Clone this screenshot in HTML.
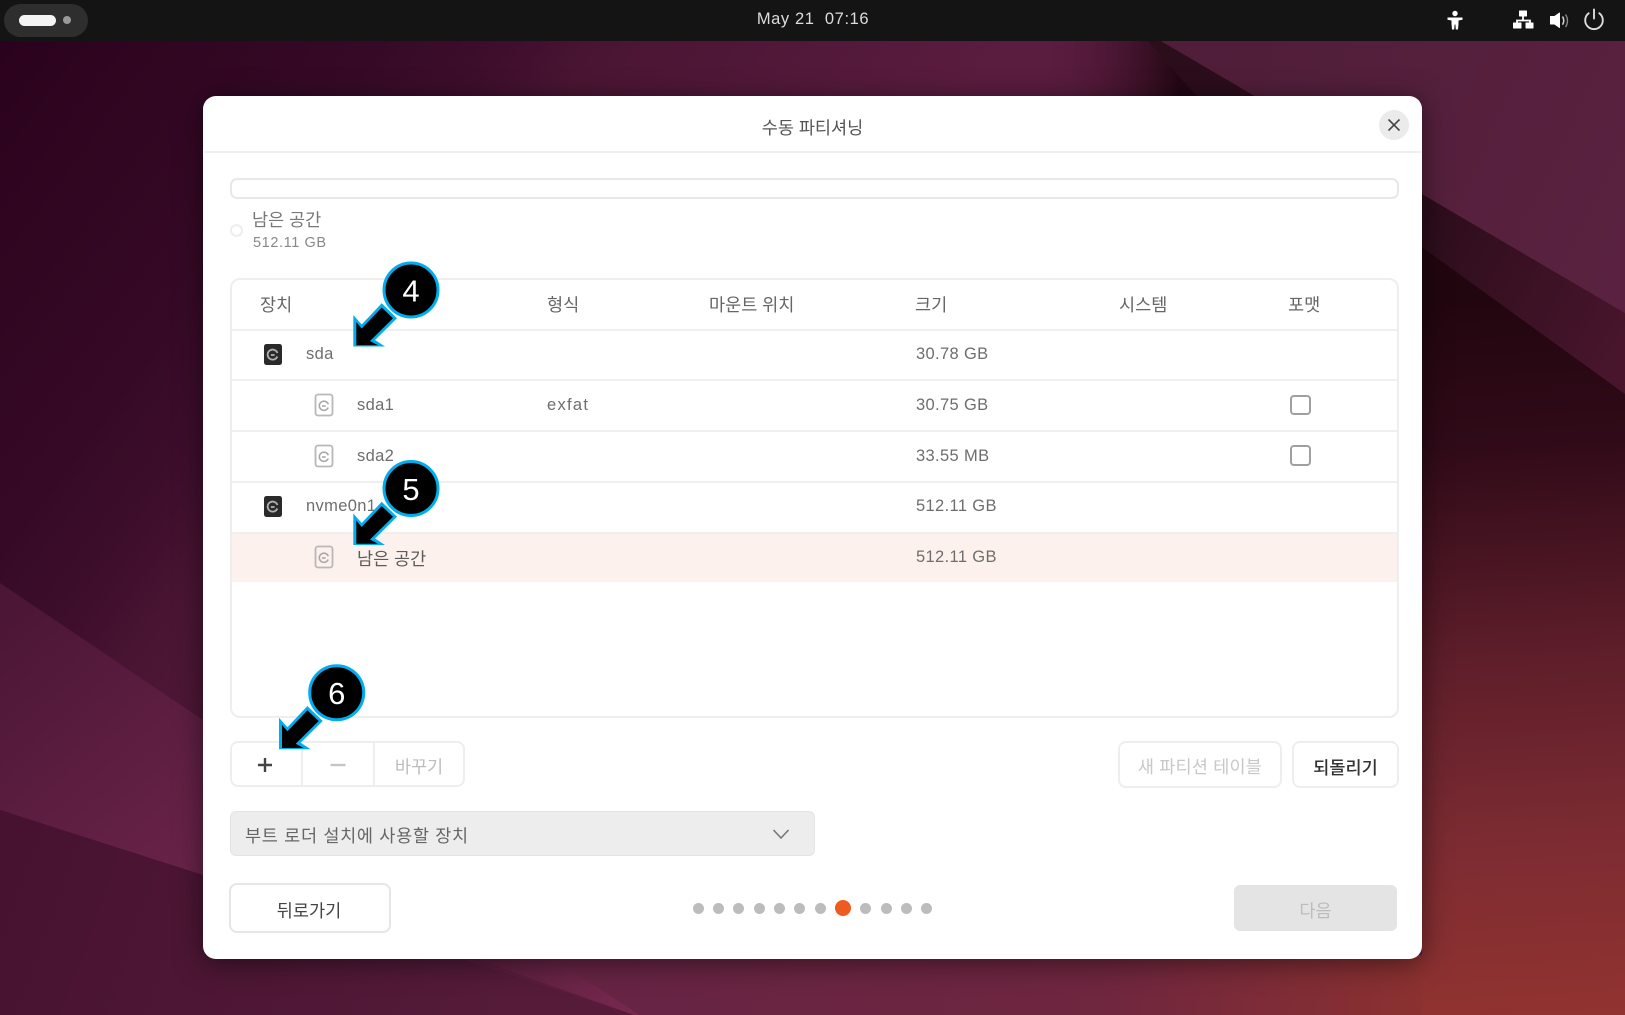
<!DOCTYPE html>
<html lang="ko">
<head>
<meta charset="utf-8">
<title>수동 파티셔닝</title>
<style>
html,body{margin:0;padding:0;width:1625px;height:1015px;overflow:hidden;background:#2b021d}
body{position:relative;font-family:"Liberation Sans","Noto Sans CJK KR",sans-serif;font-size:17.5px;color:#666}
svg{position:absolute;display:block}
.t{position:absolute;line-height:24px;height:24px;white-space:nowrap}
.b{position:absolute;box-sizing:border-box}
.c{text-align:center}
.g{font-size:16.5px;letter-spacing:.35px;color:#6e6e6e}
.h{color:#666}
.line{position:absolute;left:0;right:0;height:2px;background:#efefef}
.cb{position:absolute;box-sizing:border-box;left:1290px;width:20.500px;height:20.500px;border:2px solid #a0a0a0;border-radius:4px;background:#fff}
.dot{position:absolute;width:11px;height:11px;border-radius:50%;background:#bcbcbc;top:903px}
</style>
</head>
<body>
<svg width="1625" height="1015" viewBox="0 0 1625 1015" style="left:0;top:0">
<defs>
<linearGradient id="base" gradientUnits="userSpaceOnUse" x1="0" y1="50" x2="800" y2="650">
<stop offset="0" stop-color="#2b021d"/><stop offset=".3" stop-color="#360a26"/><stop offset=".4" stop-color="#3e0e2c"/><stop offset=".48" stop-color="#4a1533"/><stop offset=".8" stop-color="#5a1c3f"/><stop offset="1" stop-color="#5a1c3f"/>
</linearGradient>
<linearGradient id="wl" gradientUnits="userSpaceOnUse" x1="0" y1="620" x2="210" y2="870">
<stop offset="0" stop-color="#4c1636"/><stop offset="1" stop-color="#6a2449"/>
</linearGradient>
<linearGradient id="wb" gradientUnits="userSpaceOnUse" x1="0" y1="830" x2="500" y2="1015">
<stop offset="0" stop-color="#461230"/><stop offset="1" stop-color="#551b39"/>
</linearGradient>
<linearGradient id="wt" gradientUnits="userSpaceOnUse" x1="470" y1="960" x2="630" y2="1015">
<stop offset="0" stop-color="#5a1e3c"/><stop offset="1" stop-color="#76284e"/>
</linearGradient>
<linearGradient id="br" gradientUnits="userSpaceOnUse" x1="620" y1="1015" x2="1422" y2="1015">
<stop offset="0" stop-color="#672444"/><stop offset=".6" stop-color="#6f263f"/><stop offset="1" stop-color="#8b3130"/>
</linearGradient>
<linearGradient id="rr" gradientUnits="userSpaceOnUse" x1="1500" y1="300" x2="1540" y2="1015">
<stop offset="0" stop-color="#22060f"/><stop offset=".2" stop-color="#300a18"/><stop offset=".5" stop-color="#5e1e2a"/><stop offset=".75" stop-color="#7c2b32"/><stop offset="1" stop-color="#913330"/>
</linearGradient>
<linearGradient id="mid" gradientUnits="userSpaceOnUse" x1="1422" y1="220" x2="1625" y2="340">
<stop offset="0" stop-color="#2c0d1b"/><stop offset="1" stop-color="#48152c"/>
</linearGradient>
<linearGradient id="tr" gradientUnits="userSpaceOnUse" x1="1100" y1="40" x2="1625" y2="300">
<stop offset="0" stop-color="#4e1d38"/><stop offset="1" stop-color="#5a2240"/>
</linearGradient>
<linearGradient id="ts" gradientUnits="userSpaceOnUse" x1="1040" y1="60" x2="1180" y2="60">
<stop offset="0" stop-color="#5a1c3f" stop-opacity="0"/><stop offset="1" stop-color="#220712"/>
</linearGradient>
<radialGradient id="circ" cx=".6" cy=".4" r=".75">
<stop offset=".85" stop-color="#000"/><stop offset="1" stop-color="#666"/>
</radialGradient>
</defs>
<rect width="1625" height="1015" fill="url(#base)"/>
<rect x="1040" y="40" width="200" height="70" fill="url(#ts)"/>
<polygon points="0,583 203,720 520,960 203,875 0,810" fill="url(#wl)"/>
<polygon points="0,810 203,875 464,960 634,1015 0,1015" fill="url(#wb)"/>
<polygon points="464,955 548,955 640,1015 634,1015" fill="url(#wt)"/>
<polygon points="548,955 1422,955 1422,1015 640,1015" fill="url(#br)"/>
<polygon points="1147,40 1159,40 1625,313 1625,394 1422,247 1200,100" fill="url(#mid)"/>
<polygon points="1159,40 1625,40 1625,313" fill="url(#tr)"/>
<polygon points="1400,232 1422,247 1625,394 1625,1015 1422,1015 1422,900 1400,900" fill="url(#rr)"/>
</svg>

<!-- top panel -->
<div class="b" style="left:0;top:0;width:1625px;height:41px;background:#141414"></div>
<div class="b" style="left:4px;top:4px;width:84px;height:33px;border-radius:17px;background:#2e2e2e"></div>
<div class="b" style="left:19px;top:15px;width:37px;height:11px;border-radius:6px;background:#f4f4f4"></div>
<div class="b" style="left:63px;top:16px;width:8px;height:8px;border-radius:50%;background:#999"></div>
<div class="t c" style="left:713px;width:200px;top:7px;color:#dcdcdc;font-size:16.500px;letter-spacing:.6px">May 21&nbsp; 07:16</div>

<svg width="170" height="32" viewBox="0 0 170 32" style="left:1440px;top:4px">
<!-- accessibility -->
<circle cx="15" cy="9.500" r="2.700" fill="#fff"/>
<path d="M7.500 13.500h15v2.200l-4 .8v3.500l-.5 5.500h-2.200l-.4-5h-.8l-.4 5h-2.200l-.5-5.500v-3.500l-4-.8z" fill="#fff"/>
<!-- network -->
<rect x="79" y="6.500" width="8" height="6" rx=".6" fill="#fff"/>
<path d="M83 12v4.500M77 20v-3.500h13V20" fill="none" stroke="#fff" stroke-width="1.800"/>
<rect x="73" y="18.500" width="8.500" height="6" rx=".6" fill="#fff"/>
<rect x="85.500" y="18.500" width="8" height="6" rx=".6" fill="#fff"/>
<!-- volume -->
<path d="M110 12.500h4l5-3.500v14.500l-5-3.500h-4z" fill="#fff" stroke="#fff" stroke-width="1" stroke-linejoin="round" transform="translate(.5,0)"/>
<path d="M122.500 12.500c1.700 2.400 1.700 5.800 0 8.200" fill="none" stroke="#ccc" stroke-width="1.600"/>
<path d="M125.500 10.500c2.600 3.500 2.600 9 0 12.500" fill="none" stroke="#8a8a8a" stroke-width="1.400"/>
<!-- power -->
<path d="M149.200 9.800a8.800 8.800 0 1 0 10.600 0" fill="none" stroke="#dcdcdc" stroke-width="1.900" stroke-linecap="round" transform="translate(-.5,-.5)"/>
<path d="M154 5.500v9" fill="none" stroke="#dcdcdc" stroke-width="1.900" stroke-linecap="round"/>
</svg>

<!-- dialog -->
<div class="b" style="left:203px;top:96px;width:1219px;height:863px;background:#fff;border-radius:13px;box-shadow:0 4px 28px rgba(0,0,0,.5)"></div>
<div class="t c" style="left:203px;width:1219px;top:114px;margin-top:2px;color:#555">수동 파티셔닝</div>
<div class="b" style="left:1379px;top:110px;width:30px;height:30px;border-radius:50%;background:#ebebeb"></div>
<svg width="30" height="30" viewBox="0 0 30 30" style="left:1379px;top:110px"><path d="M9.500 9.500l11 11M20.500 9.500l-11 11" stroke="#444" stroke-width="1.600" fill="none"/></svg>
<div class="b" style="left:204px;top:151px;width:1217px;height:2px;background:#efefef"></div>

<div class="b" style="left:230px;top:178px;width:1169px;height:21px;border:2px solid #e8e8e8;border-radius:7px"></div>
<div class="b" style="left:230px;top:224px;width:13px;height:13px;border:2px solid #eee;border-radius:50%"></div>
<div class="t" style="left:252px;top:208px;color:#777">남은 공간</div>
<div class="t" style="left:253px;top:231px;font-size:14.500px;color:#888;letter-spacing:.6px">512.11 GB</div>

<!-- table -->
<div class="b" style="left:230px;top:278px;width:1169px;height:440px;border:2px solid #eeeeee;border-radius:10px;overflow:hidden;background:#fff">
  <div style="position:absolute;left:0;right:0;top:254px;height:48px;background:#fdf1ed"></div>
  <div class="line" style="top:49px"></div>
  <div class="line" style="top:99px"></div>
  <div class="line" style="top:150px"></div>
  <div class="line" style="top:201px"></div>
  <div class="line" style="top:252px"></div>
</div>
<div class="t h" style="left:260px;top:293px">장치</div>
<div class="t h" style="left:547px;top:293px">형식</div>
<div class="t h" style="left:709px;top:293px">마운트 위치</div>
<div class="t h" style="left:915px;top:293px">크기</div>
<div class="t h" style="left:1119px;top:293px">시스템</div>
<div class="t h" style="left:1288px;top:293px">포맷</div>

<div class="t g" style="left:306px;top:342px">sda</div>
<div class="t g" style="left:357px;top:393px">sda1</div>
<div class="t g" style="left:357px;top:444px">sda2</div>
<div class="t g" style="left:306px;top:494px">nvme0n1</div>
<div class="t" style="left:357px;top:547px;color:#5c5c5c">남은 공간</div>
<div class="t g" style="left:547px;top:393px;letter-spacing:1.300px">exfat</div>
<div class="t g" style="left:916px;top:342px">30.78 GB</div>
<div class="t g" style="left:916px;top:393px">30.75 GB</div>
<div class="t g" style="left:916px;top:444px">33.55 MB</div>
<div class="t g" style="left:916px;top:494px">512.11 GB</div>
<div class="t g" style="left:916px;top:545px">512.11 GB</div>

<!-- disk icons -->
<svg width="20" height="23" viewBox="0 0 20 23" style="left:263px;top:343px"><rect x="1" y="1" width="18" height="21" rx="2.500" fill="#2a2a2a"/><path d="M14.300 13.500a5 5 0 1 1 .1-3.500" fill="none" stroke="#b0b0b0" stroke-width="1.800"/><path d="M7.800 12h3.800" stroke="#b0b0b0" stroke-width="1.800"/></svg>
<svg width="20" height="23" viewBox="0 0 20 23" style="left:263px;top:495px"><rect x="1" y="1" width="18" height="21" rx="2.500" fill="#2a2a2a"/><path d="M14.300 13.500a5 5 0 1 1 .1-3.500" fill="none" stroke="#b0b0b0" stroke-width="1.800"/><path d="M7.800 12h3.800" stroke="#b0b0b0" stroke-width="1.800"/></svg>
<svg width="20" height="24" viewBox="0 0 20 24" style="left:314px;top:393px"><rect x="1.500" y="1.500" width="17" height="21" rx="2.500" fill="none" stroke="#b8b8b8" stroke-width="1.800"/><path d="M14.200 14.500a4.600 4.600 0 1 1 .1-3.200" fill="none" stroke="#a8a8a8" stroke-width="1.600"/><path d="M8 13h3.600" stroke="#a8a8a8" stroke-width="1.600"/></svg>
<svg width="20" height="24" viewBox="0 0 20 24" style="left:314px;top:444px"><rect x="1.500" y="1.500" width="17" height="21" rx="2.500" fill="none" stroke="#b8b8b8" stroke-width="1.800"/><path d="M14.200 14.500a4.600 4.600 0 1 1 .1-3.200" fill="none" stroke="#a8a8a8" stroke-width="1.600"/><path d="M8 13h3.600" stroke="#a8a8a8" stroke-width="1.600"/></svg>
<svg width="20" height="24" viewBox="0 0 20 24" style="left:314px;top:545px"><rect x="1.500" y="1.500" width="17" height="21" rx="2.500" fill="none" stroke="#b8b8b8" stroke-width="1.800"/><path d="M14.200 14.500a4.600 4.600 0 1 1 .1-3.200" fill="none" stroke="#a8a8a8" stroke-width="1.600"/><path d="M8 13h3.600" stroke="#a8a8a8" stroke-width="1.600"/></svg>

<div class="cb" style="top:394.500px"></div>
<div class="cb" style="top:445px"></div>

<!-- button group -->
<div class="b" style="left:230px;top:741px;width:235px;height:46px;border:2px solid #eeeeee;border-radius:8px"></div>
<div class="b" style="left:301px;top:742px;width:2px;height:44px;background:#eeeeee"></div>
<div class="b" style="left:373px;top:742px;width:2px;height:44px;background:#eeeeee"></div>
<svg width="20" height="20" viewBox="0 0 20 20" style="left:255px;top:755px"><path d="M3 10h14M10 3v14" stroke="#444" stroke-width="2.400" fill="none"/></svg>
<svg width="20" height="20" viewBox="0 0 20 20" style="left:328px;top:755px"><path d="M2.500 10h15" stroke="#c4c4c4" stroke-width="2.400" fill="none"/></svg>
<div class="t c" style="left:374px;width:90px;top:755px;color:#bdbdbd">바꾸기</div>

<div class="b" style="left:1118px;top:741px;width:164px;height:47px;border:2px solid #eeeeee;border-radius:8px"></div>
<div class="t c" style="left:1118px;width:164px;top:755px;color:#c8c8c8;letter-spacing:.2px">새 파티션 테이블</div>
<div class="b" style="left:1292px;top:741px;width:107px;height:47px;border:2px solid #eeeeee;border-radius:8px"></div>
<div class="t c" style="left:1292px;width:107px;top:755.500px;color:#333;font-weight:500">되돌리기</div>

<!-- combo -->
<div class="b" style="left:230px;top:811px;width:585px;height:45px;background:#ededed;border:1px solid #e4e4e4;border-radius:6px"></div>
<div class="t" style="left:245px;top:824px;color:#666;letter-spacing:.7px">부트 로더 설치에 사용할 장치</div>
<svg width="20" height="12" viewBox="0 0 20 12" style="left:771px;top:828px"><path d="M2.500 2l7.500 8 7.500-8" stroke="#777" stroke-width="1.600" fill="none"/></svg>

<!-- footer -->
<div class="b" style="left:229px;top:883px;width:162px;height:50px;border:2px solid #e6e6e6;border-radius:8px"></div>
<div class="t c" style="left:228px;width:162px;top:899px;color:#444">뒤로가기</div>

<div class="dot" style="left:693px"></div>
<div class="dot" style="left:713px"></div>
<div class="dot" style="left:733px"></div>
<div class="dot" style="left:754px"></div>
<div class="dot" style="left:774px"></div>
<div class="dot" style="left:794px"></div>
<div class="dot" style="left:815px"></div>
<div class="dot" style="left:835px;top:900px;width:16px;height:16px;background:#ee5a20"></div>
<div class="dot" style="left:860px"></div>
<div class="dot" style="left:881px"></div>
<div class="dot" style="left:901px"></div>
<div class="dot" style="left:921px"></div>

<div class="b" style="left:1234px;top:885px;width:163px;height:46px;background:#e4e4e4;border-radius:6px"></div>
<div class="t c" style="left:1234px;width:163px;top:899px;color:#bcbcbc">다음</div>

<!-- annotations -->
<svg width="1625" height="1015" viewBox="0 0 1625 1015" style="left:0;top:0">
<g>
<polygon points="353.300,315 361.700,324.500 381.700,303.300 397,318.300 375,340 385,346.500 353.300,346.500" fill="#00aeef"/>
<polygon points="356.300,322 361.700,328.500 381.700,307.500 393,318.300 370,341 378,345.300 356.300,345.300" fill="#000"/>
<circle cx="411" cy="290" r="27" fill="url(#circ)" stroke="#00aeef" stroke-width="3"/>
<text x="411" y="301.500" text-anchor="middle" font-family="Liberation Sans, sans-serif" font-size="31" fill="#fff">4</text>
</g>
<g transform="translate(0,198.500)">
<polygon points="353.300,315 361.700,324.500 381.700,303.300 397,318.300 375,340 385,346.500 353.300,346.500" fill="#00aeef"/>
<polygon points="356.300,322 361.700,328.500 381.700,307.500 393,318.300 370,341 378,345.300 356.300,345.300" fill="#000"/>
<circle cx="411" cy="290" r="27" fill="url(#circ)" stroke="#00aeef" stroke-width="3"/>
<text x="411" y="301.500" text-anchor="middle" font-family="Liberation Sans, sans-serif" font-size="31" fill="#fff">5</text>
</g>
<g transform="translate(-74.300,402.700)">
<polygon points="353.300,315 361.700,324.500 381.700,303.300 397,318.300 375,340 385,346.500 353.300,346.500" fill="#00aeef"/>
<polygon points="356.300,322 361.700,328.500 381.700,307.500 393,318.300 370,341 378,345.300 356.300,345.300" fill="#000"/>
<circle cx="411" cy="290" r="27" fill="url(#circ)" stroke="#00aeef" stroke-width="3"/>
<text x="411" y="301.500" text-anchor="middle" font-family="Liberation Sans, sans-serif" font-size="31" fill="#fff">6</text>
</g>
</svg>
</body>
</html>
